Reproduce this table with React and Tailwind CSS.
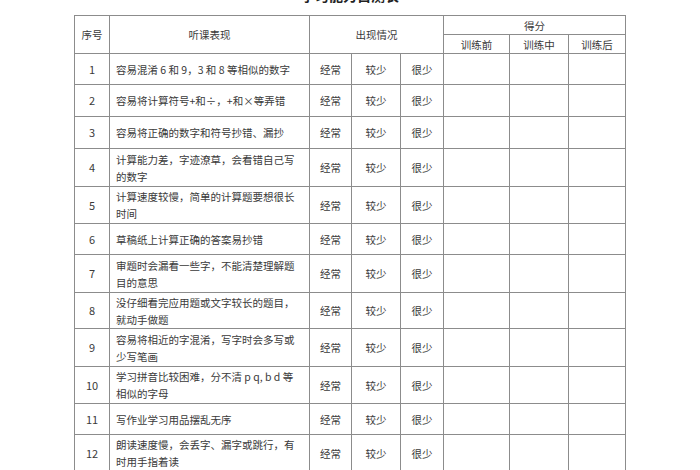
const rows = [
    { no: 1, text: "容易混淆 6 和 9，3 和 8 等相似的数字", h: "h-[31px]" },
    { no: 2, text: "容易将计算符号+和÷，+和×等弄错", h: "h-[32px]" },
    { no: 3, text: "容易将正确的数字和符号抄错、漏抄", h: "h-[32px]" },
    { no: 4, text: "计算能力差，字迹潦草，会看错自己写的数字", h: "h-[38px]" },
    { no: 5, text: "计算速度较慢，简单的计算题要想很长时间", h: "h-[37px]" },
    { no: 6, text: "草稿纸上计算正确的答案易抄错", h: "h-[31px]" },
    { no: 7, text: "审题时会漏看一些字，不能清楚理解题目的意思", h: "h-[38px]" },
    { no: 8, text: "没仔细看完应用题或文字较长的题目，就动手做题", h: "h-[36px]" },
    { no: 9, text: "容易将相近的字混淆，写字时会多写或少写笔画", h: "h-[38px]" },
    { no: 10, text: "学习拼音比较困难，分不清 p q, b d 等相似的字母", h: "h-[37px]" },
    { no: 11, text: "写作业学习用品摆乱无序", h: "h-[31px]" },
    { no: 12, text: "朗读速度慢，会丢字、漏字或跳行，有时用手指着读", h: "h-[37px]" },
];

const cell = "border border-[#8c8c8c] text-center align-middle p-0";

const App = () => {
    return (
        <div
            className="w-[700px] h-[470px] overflow-hidden bg-white text-[#3a3a3a]"
            style={{ fontFamily: '"Noto Sans CJK SC", "Noto Sans", sans-serif' }}
        >
            <div className="-mt-[15px] h-[30px] text-center text-[14px] leading-[20px] font-bold text-[#222]">
                学习能力自测表
            </div>
            <table className="mx-auto w-[551px] table-fixed border-collapse text-[10.5px] leading-[17px]">
                <colgroup>
                    <col className="w-[35px]" />
                    <col className="w-[200px]" />
                    <col className="w-[42px]" />
                    <col className="w-[49px]" />
                    <col className="w-[43px]" />
                    <col className="w-[66px]" />
                    <col className="w-[59px]" />
                    <col className="w-[57px]" />
                </colgroup>
                <thead>
                    <tr className="h-[19px]">
                        <th rowSpan={2} className={`${cell} font-normal`}>序号</th>
                        <th rowSpan={2} className={`${cell} font-normal`}>听课表现</th>
                        <th rowSpan={2} colSpan={3} className={`${cell} font-normal`}>出现情况</th>
                        <th colSpan={3} className={`${cell} font-normal`}>得分</th>
                    </tr>
                    <tr className="h-[19px]">
                        <th className={`${cell} font-normal`}>训练前</th>
                        <th className={`${cell} font-normal`}>训练中</th>
                        <th className={`${cell} font-normal`}>训练后</th>
                    </tr>
                </thead>
                <tbody>
                    {rows.map((r) => (
                        <tr key={r.no} className={r.h}>
                            <td className={`${cell} text-[11px]`}>{r.no}</td>
                            <td className="border border-[#8c8c8c] px-[6px] py-0 text-left align-middle">{r.text}</td>
                            <td className={cell}>经常</td>
                            <td className={cell}>较少</td>
                            <td className={cell}>很少</td>
                            <td className={cell}></td>
                            <td className={cell}></td>
                            <td className={cell}></td>
                        </tr>
                    ))}
                </tbody>
            </table>
        </div>
    );
};

export default App;
